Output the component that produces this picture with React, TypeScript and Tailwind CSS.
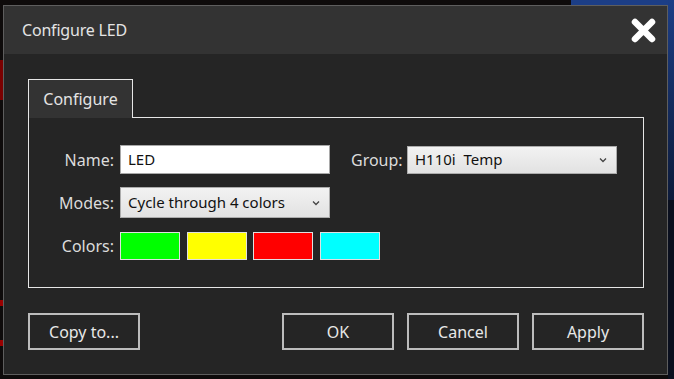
import React from "react";

const font = { fontFamily: '"Noto Sans", "Open Sans", sans-serif' };

function Chevron() {
  return (
    <svg width="8" height="6" viewBox="0 0 8 6" className="shrink-0">
      <path d="M1 1.5 L4 4.5 L7 1.5" fill="none" stroke="#444" strokeWidth="1.3" />
    </svg>
  );
}

function Select({ value, w }: { value: string; w: string }) {
  return (
    <div
      className={`${w} flex items-center justify-between border border-[#acacac] bg-gradient-to-b from-[#f2f2f2] to-[#e2e2e2] pl-[7px] pr-[9px] text-[15px] text-[#111] whitespace-pre`}
    >
      <span>{value}</span>
      <Chevron />
    </div>
  );
}

function Btn({ label }: { label: string }) {
  return (
    <div className="w-[112px] h-[37px] border-2 border-[#bcbcbc] flex items-center justify-center text-[16px] text-[#e8e8e8]">
      {label}
    </div>
  );
}

export default function App() {
  return (
    <div className="relative w-[674px] h-[379px] overflow-hidden bg-[#0e0b0b]" style={font}>
      {/* desktop background hints */}
      <div className="absolute left-[571px] top-0 right-0 h-[6px] bg-[#1c3e86]" />
      <div className="absolute right-0 top-0 w-[6px] h-[200px] bg-gradient-to-b from-[#1c3e86] to-[#0c1a3a]" />
      <div className="absolute right-0 top-[200px] w-[6px] h-[179px] bg-[#0a0f1e]" />
      <div className="absolute left-0 top-[60px] w-[3px] h-[40px] bg-[#7a0000]" />
      <div className="absolute left-0 top-[300px] w-[3px] h-[6px] bg-[#9a0000]" />
      <div className="absolute left-0 top-[340px] w-[3px] h-[6px] bg-[#9a0000]" />

      {/* dialog */}
      <div className="absolute left-[3px] top-[5px] w-[665px] h-[370px] border border-[#5e5e5e] bg-[#252525] flex flex-col">
        <div className="h-[48px] bg-[#333333] flex items-center justify-between pl-[18px] pr-[11px]">
          <span className="text-[16px] text-[#e4e4e4] tracking-[-0.2px]">Configure LED</span>
          <svg width="25" height="25" viewBox="0 0 25 25">
            <path d="M4 4 L21 21 M21 4 L4 21" stroke="#fff" strokeWidth="6.5" strokeLinecap="round" />
          </svg>
        </div>

        <div className="flex-1 pl-[24px] pt-[25px] flex flex-col">
          <div className="relative z-10 w-[105px] h-[39px] -mb-[1px] border-t border-l border-r border-[#e6e6e6] bg-[#333333] flex items-center justify-center text-[16px] text-[#e4e4e4]">
            Configure
          </div>
          <div className="w-[616px] h-[171px] border border-[#e6e6e6] pt-[27px] flex flex-col">
            <div className="flex items-center h-[29px]">
              <div className="w-[85px] text-right text-[16px] text-[#dcdcdc]">Name:</div>
              <div className="ml-[6px] w-[210px] h-[29px] border border-[#a9a9a9] bg-white flex items-center pl-[7px] text-[15px] text-[#111]">
                LED
              </div>
              <div className="ml-[21px] w-[56px] text-[16px] text-[#dcdcdc] whitespace-nowrap">Group:</div>
              <div className="h-[28px] flex">
                <Select value="H110i  Temp" w="w-[210px]" />
              </div>
            </div>
            <div className="flex items-center h-[31px] mt-[13px]">
              <div className="w-[85px] text-right text-[16px] text-[#dcdcdc]">Modes:</div>
              <div className="ml-[6px] h-[31px] flex">
                <Select value="Cycle through 4 colors" w="w-[210px]" />
              </div>
            </div>
            <div className="flex items-center h-[28px] mt-[14px]">
              <div className="w-[85px] text-right text-[16px] text-[#dcdcdc]">Colors:</div>
              <div className="ml-[6px] flex gap-[6.5px]">
                <div className="w-[60px] h-[28px] border border-[#e0e0e0] bg-[#00ff00]" />
                <div className="w-[60px] h-[28px] border border-[#e0e0e0] bg-[#ffff00]" />
                <div className="w-[60px] h-[28px] border border-[#e0e0e0] bg-[#ff0000]" />
                <div className="w-[60px] h-[28px] border border-[#e0e0e0] bg-[#00ffff]" />
              </div>
            </div>
          </div>

          <div className="w-[616px] mt-[25px] flex justify-between">
            <Btn label="Copy to..." />
            <div className="flex gap-[13px]">
              <Btn label="OK" />
              <Btn label="Cancel" />
              <Btn label="Apply" />
            </div>
          </div>
        </div>
      </div>
    </div>
  );
}
